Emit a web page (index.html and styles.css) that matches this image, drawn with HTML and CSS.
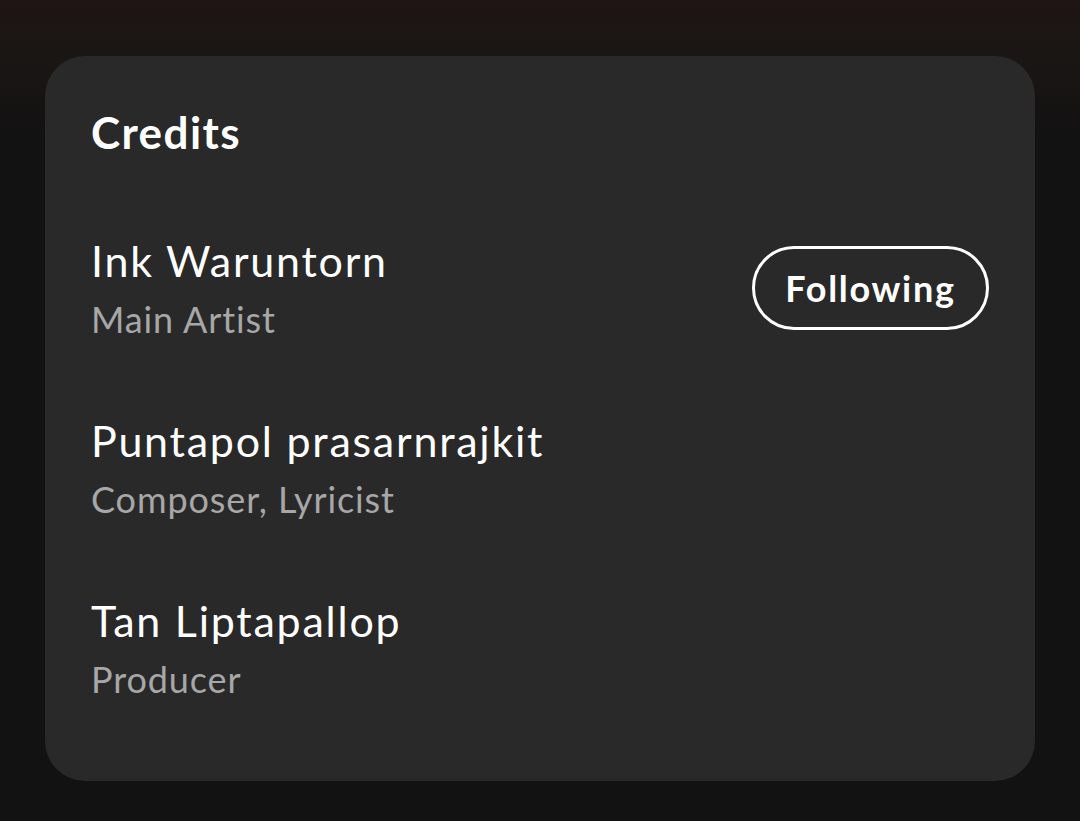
FILE: index.html
```html
<!DOCTYPE html>
<html>
<head>
<meta charset="utf-8">
<link rel="stylesheet" href="styles.css">
</head>
<body>
<section class="card">
  <h2 class="title">Credits</h2>
  <div class="list">
    <div class="row">
      <div class="info">
        <div class="name">Ink Waruntorn</div>
        <div class="role">Main Artist</div>
      </div>
      <button class="follow">Following</button>
    </div>
    <div class="row">
      <div class="info">
        <div class="name">Puntapol prasarnrajkit</div>
        <div class="role">Composer, Lyricist</div>
      </div>
    </div>
    <div class="row">
      <div class="info">
        <div class="name">Tan Liptapallop</div>
        <div class="role">Producer</div>
      </div>
    </div>
  </div>
</section>
</body>
</html>
```
FILE: styles.css
```css
html, body {
  margin: 0;
  padding: 0;
}
body {
  width: 1080px;
  height: 821px;
  overflow: hidden;
  background: linear-gradient(to bottom, #1e1514 0px, #1a1614 60px, #131212 130px, #121212 200px);
  padding: 56px 45px 0;
  box-sizing: border-box;
  font-family: "Lato", "Noto Sans", sans-serif;
  font-variant-ligatures: none;
  color: #fff;
}
.card {
  background: #292929;
  border-radius: 40px;
  height: 725px;
  box-sizing: border-box;
  padding: 50px 46px 0 46px;
}
.title {
  margin: 0;
  font-size: 44px;
  line-height: 52px;
  font-weight: 700;
  letter-spacing: 1.4px;
}
.list {
  margin-top: 72px;
  display: flex;
  flex-direction: column;
  gap: 64px;
}
.row {
  display: flex;
  align-items: center;
  justify-content: space-between;
}
.name {
  font-size: 43px;
  line-height: 62px;
  font-weight: 400;
  letter-spacing: 1.75px;
}
.role {
  font-size: 36px;
  line-height: 54px;
  color: #a7a7a7;
  letter-spacing: 0.9px;
}
.follow {
  width: 237px;
  height: 84px;
  border: 3px solid #fff;
  border-radius: 42px;
  background: transparent;
  color: #fff;
  font-family: inherit;
  font-variant-ligatures: none;
  font-size: 36px;
  font-weight: 700;
  letter-spacing: 1.7px;
  padding: 0;
}
```
